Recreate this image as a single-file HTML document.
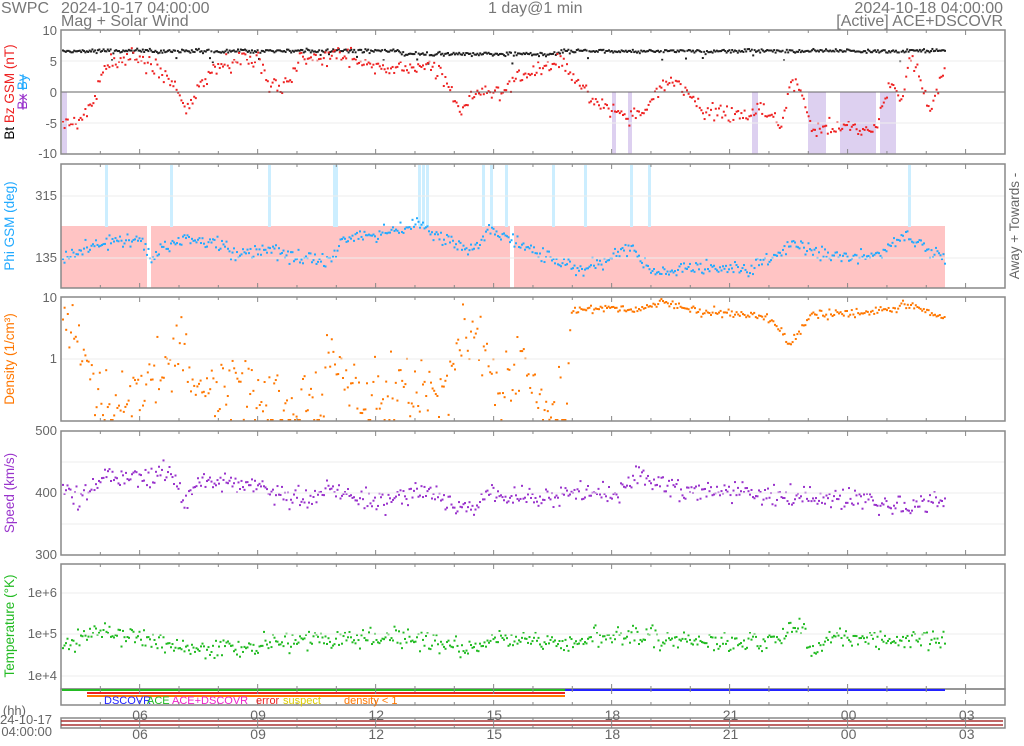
<!DOCTYPE html>
<html><head><meta charset="utf-8"><style>
body{margin:0;background:#fff;width:1024px;height:741px;overflow:hidden;font-family:"Liberation Sans",sans-serif}
svg text{font-family:"Liberation Sans",sans-serif}
</style></head><body>
<svg id="s" width="1024" height="741" xmlns="http://www.w3.org/2000/svg">
<g font-size="16" fill="#777">
<text x="1" y="13">SWPC</text>
<text x="61" y="13">2024-10-17 04:00:00</text>
<text x="61" y="26">Mag + Solar Wind</text>
<text x="488" y="13">1 day@1 min</text>
<text x="1003" y="13" text-anchor="end">2024-10-18 04:00:00</text>
<text x="1003" y="26" text-anchor="end">[Active] ACE+DSCOVR</text>
</g>
<g id="bg"></g><g id="d"></g><g id="ax"></g>
<g font-size="13" fill="#666" text-anchor="end">
<text x="57" y="35">10</text><text x="57" y="97">0</text><text x="57" y="66">5</text><text x="57" y="128">-5</text><text x="57" y="158">-10</text>
<text x="57" y="200">315</text><text x="57" y="262">135</text>
<text x="57" y="302">10</text><text x="57" y="363">1</text>
<text x="57" y="435">500</text><text x="57" y="497">400</text><text x="57" y="559">300</text>
<text x="57" y="597">1e+6</text><text x="57" y="638">1e+5</text><text x="57" y="680">1e+4</text>
</g>
<g font-size="13.5" text-anchor="middle">
<text transform="translate(14,92) rotate(-90)"><tspan fill="#000">Bt </tspan><tspan fill="#e22"> Bz GSM (nT)</tspan></text>
<text transform="translate(27,92) rotate(-90)"><tspan fill="#93c" text-decoration="line-through">Bx</tspan><tspan> </tspan><tspan fill="#2af" text-decoration="line-through">By</tspan></text>
<text transform="translate(14,226) rotate(-90)" fill="#2af">Phi GSM (deg)</text>
<text transform="translate(14,359) rotate(-90)" fill="#f70">Density (1/cm³)</text>
<text transform="translate(14,493) rotate(-90)" fill="#93c">Speed (km/s)</text>
<text transform="translate(14,626) rotate(-90)" fill="#2b2">Temperature (°K)</text>
<text transform="translate(1019,226) rotate(-90)" fill="#666">Away +   Towards -</text>
</g>
<g font-size="11">
<text x="104" y="704" fill="#22f">DSCOVR</text><text x="147" y="704" fill="#2b2">ACE</text>
<text x="172" y="704" fill="#e2c">ACE+DSCOVR</text><text x="256" y="704" fill="#e22">error</text>
<text x="283" y="704" fill="#dc0">suspect</text><text x="344" y="704" fill="#f70">density &lt; 1</text>
</g>
<g font-size="14" fill="#666" text-anchor="middle" id="tl"></g>
<g font-size="13" fill="#666" text-anchor="end"><text x="26" y="715">(hh)</text><text x="52" y="724">2024-10-17</text><text x="52" y="736">04:00:00</text></g>
</svg>
<script>
var NS="http://www.w3.org/2000/svg";
function el(p,t,a){var e=document.createElementNS(NS,t);for(var k in a)e.setAttribute(k,a[k]);document.getElementById(p).appendChild(e);return e}
var seed=7;function r(){seed=(seed*16807)%2147483647;return seed/2147483647}
function g(){return (r()+r()+r()-1.5)*0.9}
function interp(k,x){for(var i=0;i<k.length-1;i++){if(x>=k[i][0]&&x<=k[i+1][0]){var t=(x-k[i][0])/(k[i+1][0]-k[i][0]);return k[i][1]+t*(k[i+1][1]-k[i][1])}}return k[k.length-1][1]}
var L=61,R=1005,E=945;
var panels=[[30,154],[164,288],[297,421],[431,555],[564,689]];
el("bg","rect",{x:61,y:226,width:884,height:62,fill:"#ffc4c4"});
[[62,67],[612,616],[628,632],[752,758],[808,826],[840,876],[880,896]].forEach(function(b){el("bg","rect",{x:b[0],y:92,width:b[1]-b[0],height:62,fill:"#ddd0f0"})});
[105,170,268,333,335,418,422,426,482,490,505,552,584,630,648,908].forEach(function(x){el("bg","rect",{x:x,y:165,width:3,height:62,fill:"#cceeff"})});
[147,510].forEach(function(x){el("bg","rect",{x:x,y:226,width:4,height:62,fill:"#fff"})});
var gy=[61,92,123,196,258,359,462,493,524,593,634,676];
gy.forEach(function(y){el("ax","line",{x1:61,x2:1005,y1:y,y2:y,stroke:y==92?"#666":"#eee","stroke-width":1})});
panels.forEach(function(p){el("ax","rect",{x:61,y:p[0],width:944,height:p[1]-p[0],fill:"none",stroke:"#888","stroke-width":1.5})});
el("ax","rect",{x:61,y:689,width:944,height:16,fill:"none",stroke:"#888","stroke-width":1.5});
el("ax","rect",{x:61,y:718,width:944,height:10,fill:"none",stroke:"#888","stroke-width":1.5});
el("ax","line",{x1:61,x2:1003,y1:721,y2:721,stroke:"#a33","stroke-width":1.5});
el("ax","line",{x1:61,x2:1003,y1:725,y2:725,stroke:"#a33","stroke-width":1.5});
el("ax","rect",{x:62,y:689,width:883,height:2,fill:"#2b2"});
el("ax","rect",{x:565,y:689,width:380,height:2,fill:"#22f"});
el("ax","rect",{x:87,y:692,width:478,height:2,fill:"#e22"});
el("ax","rect",{x:87,y:695,width:478,height:2,fill:"#f70"});
var ticks=[];for(var h=5;h<=27;h++)ticks.push(L+(h-4)*39.33);
ticks.forEach(function(x,i){panels.concat([[689,705],[718,728]]).forEach(function(p){var big=((i+5)%3==0);var l=big?5:3;el("ax","line",{x1:x,x2:x,y1:p[0],y2:p[0]+l,stroke:"#888"});el("ax","line",{x1:x,x2:x,y1:p[1]-l,y2:p[1],stroke:"#888"})})});
["06","09","12","15","18","21","00","03"].forEach(function(t,i){var x=140+i*118.1;var a=el("tl","text",{x:x,y:720});a.textContent=t;var b=el("tl","text",{x:x,y:739});b.textContent=t});
function dots(c,f,step){for(var x=62;x<E;x+=step){var y=f(x);if(y!=null)el("d","rect",{x:x,y:y-1,width:2,height:2,fill:c})}}
dots("#222",function(x){return 51-(x>400&&x<560?-3:0)+g()*2+(r()<0.05?r()*10:0)},1.4);
var bz=[[62,124],[70,126],[90,108],[100,75],[110,60],[140,58],[155,70],[175,85],[185,112],[200,85],[215,68],[245,58],[258,58],[265,80],[280,92],[290,75],[300,58],[350,58],[360,60],[380,70],[400,68],[440,70],[460,110],[480,90],[500,92],[520,75],[560,60],[590,100],[610,108],[630,120],[650,100],[670,80],[690,95],[700,110],[730,115],[760,112],[780,125],[790,82],[800,88],[810,125],[840,130],[850,125],[860,132],[875,130],[890,85],[900,100],[910,58],[920,80],[930,110],[945,60]];
dots("#e22",function(x){return interp(bz,x)+g()*9},1.6);
var phi=[[62,258],[100,242],[140,240],[150,258],[180,237],[220,245],[240,255],[270,248],[290,258],[330,260],[340,240],[380,235],[420,222],[440,240],[470,250],[490,230],[520,245],[560,262],[580,268],[600,262],[630,245],[650,272],[700,268],[750,270],[790,245],[830,255],[870,258],[905,236],[945,258]];
dots("#2af",function(x){return interp(phi,x)+g()*8},1.5);
var den=[[62,325],[80,340],[95,400],[110,415],[180,350],[200,400],[230,380],[260,410],[320,400],[330,350],[360,400],[400,390],[440,400],[460,340],[480,345],[500,400],[520,360],[540,410],[565,410],[570,312],[600,308],[640,310],[660,302],[700,312],[760,315],[780,330],[790,345],[810,315],[860,312],[910,305],[945,318]];
dots("#f70",function(x){var b=interp(den,x);if(x<567)return Math.min(420,b+g()*40);return b+g()*5},1.6);
var sp=[[62,487],[80,500],[100,478],[140,478],[170,470],[185,505],[200,480],[240,485],[300,500],[330,490],[380,505],[420,490],[470,510],[490,493],[540,500],[580,490],[610,495],[640,475],[680,490],[720,492],[780,495],[820,500],[860,497],[880,507],[945,503]];
dots("#93c",function(x){return interp(sp,x)+g()*11},1.5);
var tp=[[62,645],[100,630],[150,640],[200,650],[300,640],[400,638],[460,648],[500,638],[560,645],[600,636],[700,640],[760,645],[800,628],[810,650],[830,640],[945,640]];
dots("#2b2",function(x){return interp(tp,x)+g()*11},1.5);
</script>
</body></html>
